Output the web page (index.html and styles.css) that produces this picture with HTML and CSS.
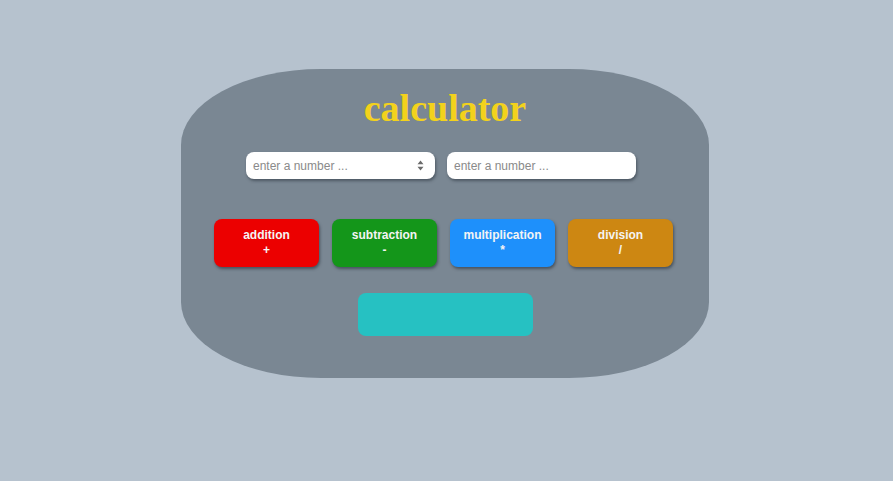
FILE: index.html
```html
<!DOCTYPE html>
<html>
<head>
<meta charset="utf-8">
<link rel="stylesheet" href="styles.css">
</head>
<body>
<div class="panel">
  <h1 class="title">calculator</h1>
  <div class="inputs">
    <div class="field">
      <input class="num" type="text" placeholder="enter a number ...">
      <svg class="spin" width="7" height="11" viewBox="0 0 7 11"><path d="M3.5 0.5 L6.5 4.2 H0.5 Z M3.5 10.5 L6.5 6.8 H0.5 Z" fill="#6b6b6b"/></svg>
    </div>
    <div class="field">
      <input class="num" type="text" placeholder="enter a number ...">
    </div>
  </div>
  <div class="ops">
    <button class="op add">addition<br>+</button>
    <button class="op sub">subtraction<br>-</button>
    <button class="op mul">multiplication<br>*</button>
    <button class="op div">division<br>/</button>
  </div>
  <div class="result"></div>
</div>
</body>
</html>
```

FILE: styles.css
```css
html, body {
  background: #b6c2ce;
}
body {
  margin: 8px 11px 8px 8px;
  font-family: "Liberation Sans", Arial, sans-serif;
}
.panel {
  width: 528px;
  margin: 61px auto 0;
  background: #7a8793;
  border-radius: 140px / 76px;
  padding: 17px 0 42px;
  display: flex;
  flex-direction: column;
  align-items: center;
}
.title {
  margin: 0;
  font-family: "Liberation Serif", "Times New Roman", serif;
  font-weight: bold;
  font-size: 38px;
  line-height: 44px;
  color: #f3d21c;
}
.inputs {
  margin-top: 22px;
  display: flex;
  gap: 12px;
  margin-right: 8px;
}
.field {
  position: relative;
}
.num {
  box-sizing: border-box;
  width: 189px;
  height: 27px;
  border: none;
  border-radius: 8px;
  background: #fff;
  box-shadow: 1px 2px 3px rgba(40, 50, 60, 0.55);
  padding: 0 7px;
  font-family: "Liberation Sans", Arial, sans-serif;
  font-size: 12px;
  color: #333;
  outline: none;
}
.num::placeholder {
  color: #8a8a8a;
}
.spin {
  position: absolute;
  right: 11px;
  top: 8px;
}
.ops {
  margin-top: 40px;
  display: flex;
  gap: 13px;
  margin-right: 3px;
}
.op {
  width: 105px;
  height: 48px;
  border: none;
  border-radius: 8px;
  color: #f4f4f4;
  font-family: "Liberation Sans", Arial, sans-serif;
  font-weight: bold;
  font-size: 12px;
  line-height: 15px;
  padding: 0;
  box-shadow: 1px 2px 3px rgba(40, 50, 60, 0.6);
}
.add { background: #ec0000; }
.sub { background: #14961a; }
.mul { background: #1e90fb; }
.div { background: #cd8712; }
.result {
  margin-top: 26px;
  width: 175px;
  height: 43px;
  border-radius: 8px;
  background: #26c1c2;
}
```
